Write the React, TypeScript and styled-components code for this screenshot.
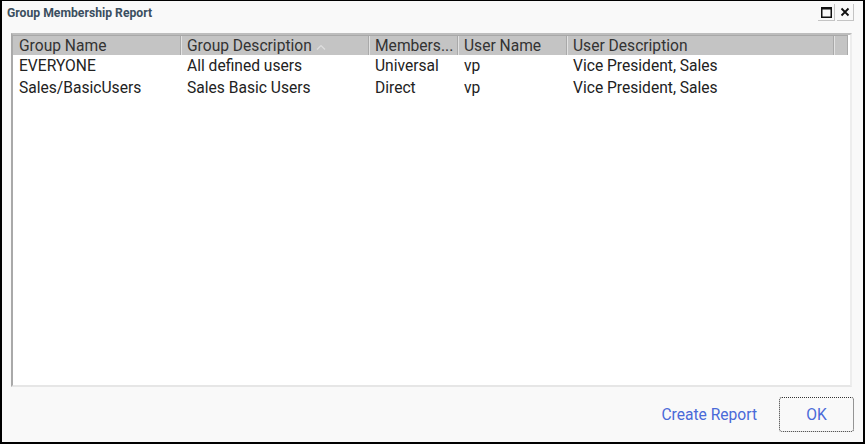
import React from 'react';
import styled, { createGlobalStyle } from 'styled-components';

const GlobalStyle = createGlobalStyle`
  html, body {
    margin: 0;
    padding: 0;
    background: #ffffff;
  }
  * {
    box-sizing: border-box;
  }
`;

interface Column {
  key: string;
  title: string;
  width: number;
  sorted?: boolean;
}

interface Row {
  groupName: string;
  groupDescription: string;
  membership: string;
  userName: string;
  userDescription: string;
}

const columns: Column[] = [
  { key: 'groupName', title: 'Group Name', width: 168 },
  { key: 'groupDescription', title: 'Group Description', width: 188, sorted: true },
  { key: 'membership', title: 'Members...', width: 89 },
  { key: 'userName', title: 'User Name', width: 109 },
  { key: 'userDescription', title: 'User Description', width: 267 },
];

const rows: Row[] = [
  {
    groupName: 'EVERYONE',
    groupDescription: 'All defined users',
    membership: 'Universal',
    userName: 'vp',
    userDescription: 'Vice President, Sales',
  },
  {
    groupName: 'Sales/BasicUsers',
    groupDescription: 'Sales Basic Users',
    membership: 'Direct',
    userName: 'vp',
    userDescription: 'Vice President, Sales',
  },
];

const Dialog = styled.div`
  width: 865px;
  height: 444px;
  display: flex;
  flex-direction: column;
  background: #f9f9f9;
  border: 2px solid #000;
  border-top-width: 1px;
  font-family: Roboto, 'Liberation Sans', sans-serif;
`;

const TitleBar = styled.div`
  height: 32px;
  display: flex;
  align-items: flex-start;
  justify-content: space-between;
  padding: 4px 9px 0 5px;
`;

const Title = styled.div`
  font-size: 12.2px;
  font-weight: 700;
  color: #3b4f5f;
  line-height: 16px;
`;

const WindowButtons = styled.div`
  display: flex;
  gap: 2px;
  margin-top: -1px;
`;

const WindowButton = styled.button`
  width: 17px;
  height: 17px;
  padding: 0;
  display: flex;
  align-items: center;
  justify-content: center;
  background: #f9f9f9;
  border: none;
  border-right: 1px solid #c4c4c4;
  border-bottom: 1px solid #c4c4c4;
  cursor: pointer;

  svg {
    display: block;
  }
`;

const Body = styled.div`
  flex: 1;
  display: flex;
  padding: 0 11px 0 9px;
  min-height: 0;
`;

const TableBox = styled.div`
  flex: 1;
  display: flex;
  flex-direction: column;
  background: #ffffff;
  border-left: 2px solid #a9a9a9;
  border-top: 2px solid #bdbdbd;
  border-right: 2px solid #ededed;
  border-bottom: 2px solid #e6e6e6;
  padding-right: 2px;
`;

const HeaderRow = styled.div`
  display: flex;
  height: 20px;
  background: #c4c4c4;
  border-top: 1px solid #a8a8a8;
`;

const HeaderCell = styled.div<{ $width: number }>`
  width: ${p => p.$width}px;
  flex-shrink: 0;
  display: flex;
  align-items: center;
  padding-left: 6px;
  font-size: 15.6px;
  color: #333333;
  white-space: nowrap;
  overflow: hidden;
  border-right: 1px solid #a9a9a9;
  box-shadow: inset 1px 0 0 #e2e2e2;

  &:first-child {
    box-shadow: none;
  }
`;

const HeaderFiller = styled.div`
  flex: 1;
  box-shadow: inset 1px 0 0 #e2e2e2;
  border-right: 1px solid #a9a9a9;
`;

const SortArrow = styled.svg`
  margin-left: 4px;
  margin-top: 3px;
`;

const DataRow = styled.div`
  display: flex;
  height: 22px;
`;

const DataCell = styled.div<{ $width: number }>`
  width: ${p => p.$width}px;
  flex-shrink: 0;
  display: flex;
  align-items: center;
  padding-left: 6px;
  font-size: 15.6px;
  color: #222222;
  white-space: nowrap;
  overflow: hidden;
`;

const Footer = styled.div`
  height: 55px;
  display: flex;
  align-items: flex-start;
  justify-content: flex-end;
  gap: 22px;
  padding: 10px 9px 0 0;
`;

const LinkButton = styled.button`
  height: 35px;
  padding: 0;
  background: none;
  border: none;
  font-family: Roboto, 'Liberation Sans', sans-serif;
  font-size: 15.6px;
  color: #4a6ad8;
  cursor: pointer;
`;

const OkButton = styled.button`
  width: 75px;
  height: 35px;
  background: #f9f9f9;
  border: 1px dotted #333333;
  border-radius: 3px;
  font-family: Roboto, 'Liberation Sans', sans-serif;
  font-size: 15.6px;
  color: #4a6ad8;
  cursor: pointer;
`;

const App: React.FC = () => {
  return (
    <>
      <GlobalStyle />
      <Dialog>
        <TitleBar>
          <Title>Group Membership Report</Title>
          <WindowButtons>
            <WindowButton aria-label="Maximize">
              <svg width="11" height="11" viewBox="0 0 11 11">
                <rect x="0.75" y="0.75" width="9.5" height="9.5" fill="none" stroke="#111" strokeWidth="1.5" />
                <rect x="0" y="0" width="11" height="2.5" fill="#111" />
              </svg>
            </WindowButton>
            <WindowButton aria-label="Close">
              <svg width="10" height="10" viewBox="0 0 10 10">
                <path d="M1.5 1.5 L8.5 8.5 M8.5 1.5 L1.5 8.5" stroke="#111" strokeWidth="1.8" />
              </svg>
            </WindowButton>
          </WindowButtons>
        </TitleBar>
        <Body>
          <TableBox>
            <HeaderRow>
              {columns.map(col => (
                <HeaderCell key={col.key} $width={col.width}>
                  {col.title}
                  {col.sorted && (
                    <SortArrow width="10" height="6" viewBox="0 0 10 6">
                      <path d="M1 5.5 L5 1.5 L9 5.5" fill="none" stroke="#dedede" strokeWidth="1.2" />
                    </SortArrow>
                  )}
                </HeaderCell>
              ))}
              <HeaderFiller />
            </HeaderRow>
            {rows.map((row, i) => (
              <DataRow key={i}>
                {columns.map(col => (
                  <DataCell key={col.key} $width={col.width}>
                    {row[col.key as keyof Row]}
                  </DataCell>
                ))}
              </DataRow>
            ))}
          </TableBox>
        </Body>
        <Footer>
          <LinkButton>Create Report</LinkButton>
          <OkButton>OK</OkButton>
        </Footer>
      </Dialog>
    </>
  );
};

export default App;
